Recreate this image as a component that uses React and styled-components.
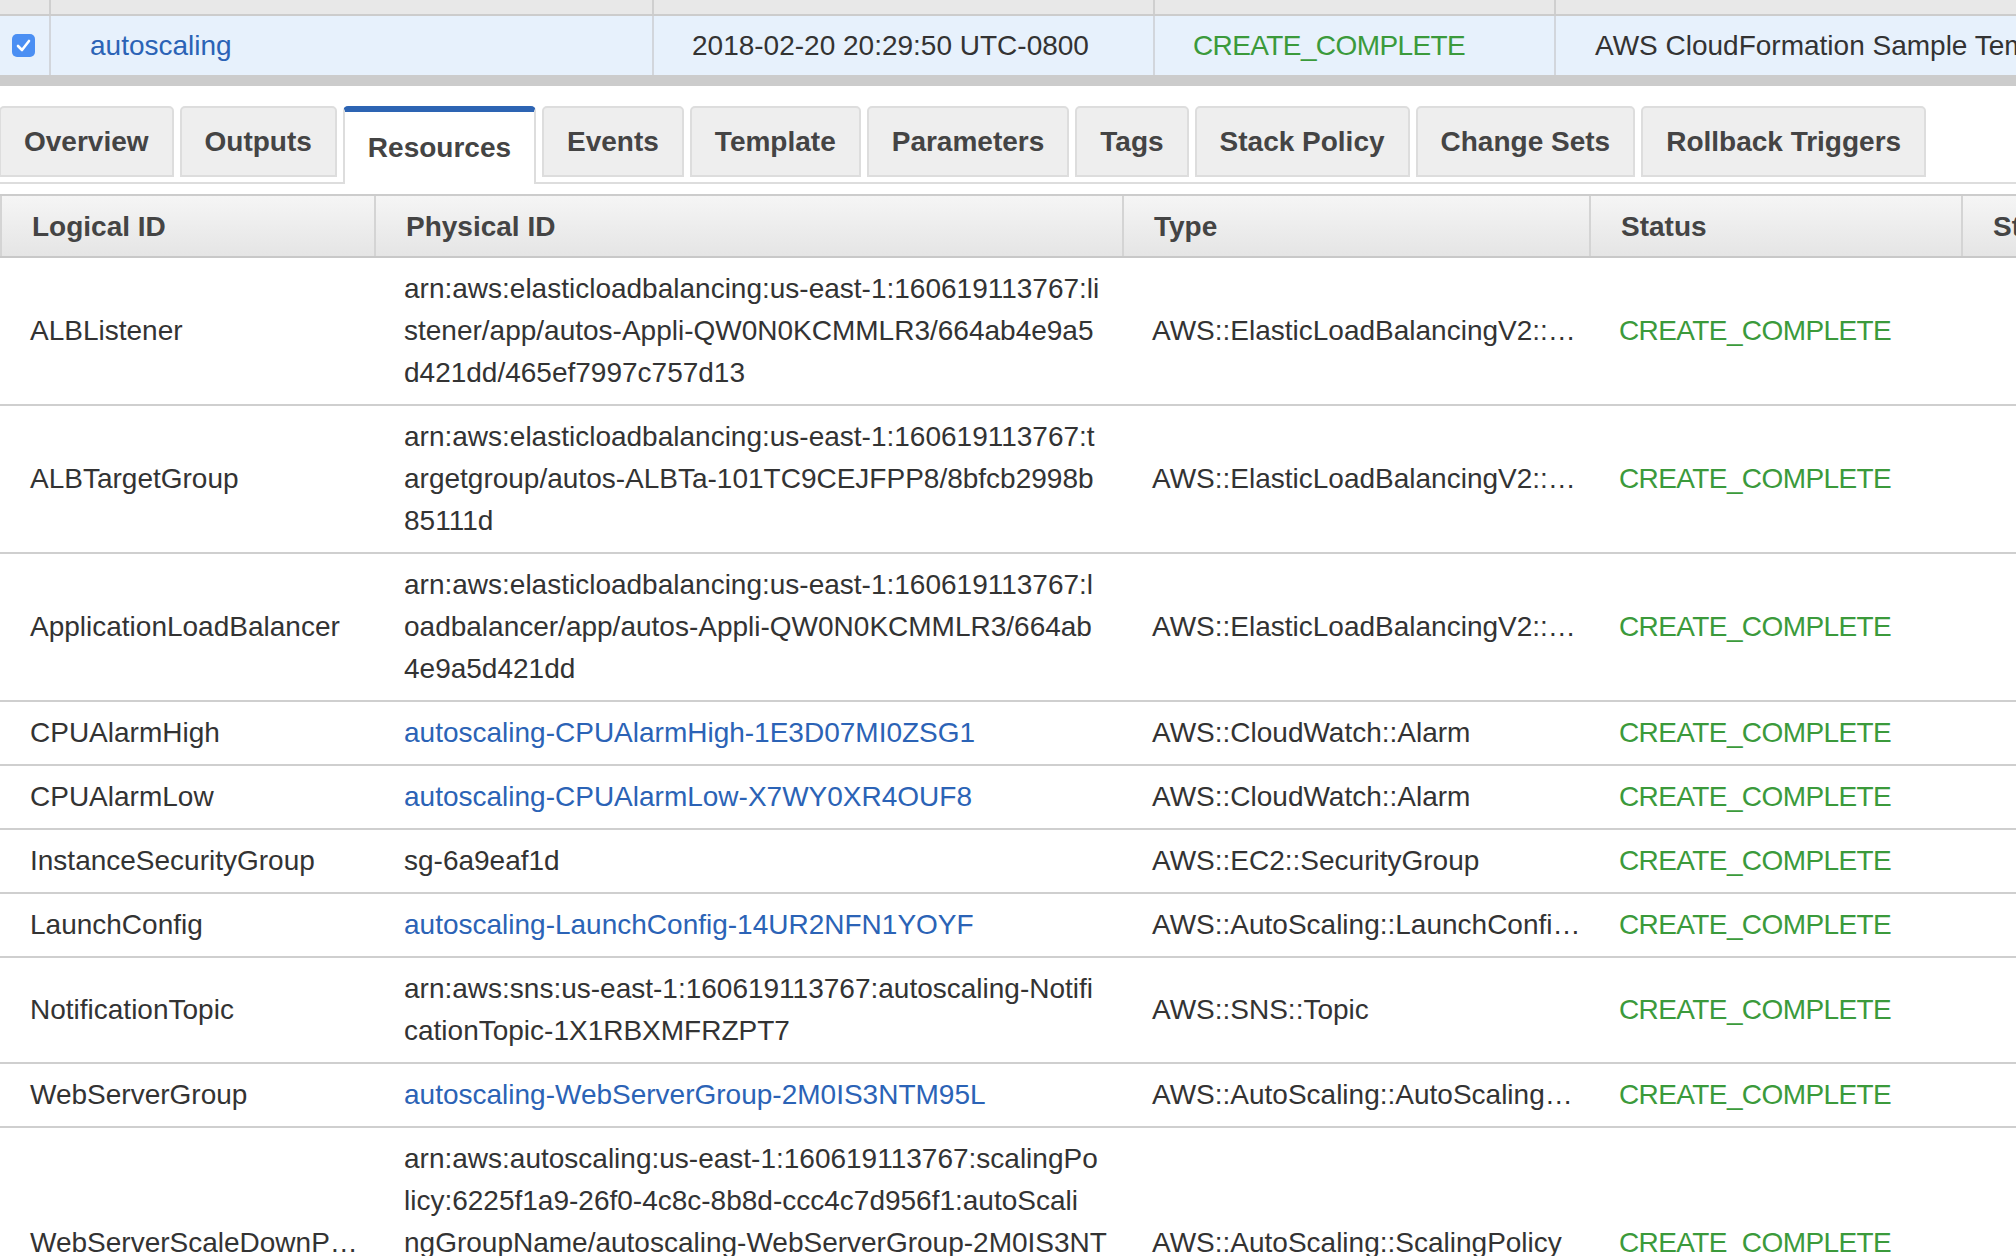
import styled, { createGlobalStyle } from 'styled-components';

const GlobalStyle = createGlobalStyle`
	html, body {
		margin: 0;
		padding: 0;
		background: #ffffff;
		overflow: hidden;
	}
	body {
		font-family: "Liberation Sans", Arial, Helvetica, sans-serif;
		color: #333333;
	}
	* {
		box-sizing: border-box;
	}
`;

const Page = styled.div`
	width: 2016px;
	height: 1256px;
	overflow: hidden;
	font-size: 28px;
`;

const stackColumns = '49px 603px 501px 401px 600px';
const resourceColumns = '374px 748px 467px 372px 500px';

const StackHead = styled.div`
	display: grid;
	grid-template-columns: ${stackColumns};
	height: 16px;
	background: #e8e8e8;
	border-bottom: 2px solid #cccccc;
`;

const StackHeadCell = styled.div`
	border-left: ${(props) => (props.$first ? 'none' : '2px solid #cfcfcf')};
`;

const StackRow = styled.div`
	display: grid;
	grid-template-columns: ${stackColumns};
	height: 59px;
	background: #e7f1fc;
`;

const StackCell = styled.div`
	display: flex;
	align-items: center;
	padding-left: ${(props) => props.$pad || 38}px;
	border-left: ${(props) => (props.$first ? 'none' : '2px solid #d2d6dc')};
	white-space: nowrap;
	overflow: hidden;
	color: ${(props) => props.$color || '#333333'};
	letter-spacing: ${(props) => (props.$status ? '-0.6px' : 'normal')};
`;

const Checkbox = styled.span`
	display: inline-flex;
	align-items: center;
	justify-content: center;
	width: 23px;
	height: 23px;
	border-radius: 5px;
	background: #4b8ff3;
`;

const Splitter = styled.div`
	height: 11px;
	background: #cccccc;
`;

const TabBar = styled.div`
	display: flex;
	align-items: flex-start;
	gap: 6px;
	margin-top: 20px;
	margin-left: -1px;
	height: 78px;
	border-bottom: 2px solid #dddddd;
`;

const Tab = styled.div`
	display: flex;
	align-items: center;
	height: ${(props) => (props.$active ? '78px' : '71px')};
	padding: 0 23px;
	font-weight: bold;
	font-size: 28px;
	color: #444444;
	white-space: nowrap;
	background: ${(props) => (props.$active ? '#ffffff' : '#eeeeee')};
	border: 2px solid #dddddd;
	border-top: ${(props) => (props.$active ? '6px solid #2d64b3' : '2px solid #dddddd')};
	border-bottom: ${(props) => (props.$active ? 'none' : '2px solid #dddddd')};
	border-radius: 5px 5px 0 0;
`;

const Table = styled.div`
	margin-top: 10px;
`;

const HeadRow = styled.div`
	display: grid;
	grid-template-columns: ${resourceColumns};
	height: 64px;
	border-top: 2px solid #cccccc;
	border-bottom: 2px solid #c8c8c8;
	background: linear-gradient(180deg, #f5f5f5 0%, #e5e5e5 100%);
`;

const HeadCell = styled.div`
	display: flex;
	align-items: center;
	padding-left: 30px;
	padding-top: 2px;
	font-weight: bold;
	color: #444444;
	white-space: nowrap;
	overflow: hidden;
	border-left: 2px solid #d4d4d4;
`;

const Row = styled.div`
	display: grid;
	grid-template-columns: ${resourceColumns};
	align-items: center;
	border-bottom: 2px solid #cfcfcf;
	padding: 10px 0;
	line-height: 42px;
`;

const Cell = styled.div`
	padding: 0 8px 0 30px;
	white-space: ${(props) => (props.$wrap ? 'normal' : 'nowrap')};
	overflow: hidden;
	text-overflow: ellipsis;
	color: ${(props) => props.$color || '#333333'};
	letter-spacing: ${(props) => (props.$status ? '-0.6px' : 'normal')};
`;

const Line = styled.span`
	display: block;
`;

const Link = styled.a`
	color: #2b63b6;
	text-decoration: none;
`;

const tabs = [
	'Overview',
	'Outputs',
	'Resources',
	'Events',
	'Template',
	'Parameters',
	'Tags',
	'Stack Policy',
	'Change Sets',
	'Rollback Triggers',
];

const resources = [
	{
		logical: 'ALBListener',
		physical: [
			'arn:aws:elasticloadbalancing:us-east-1:160619113767:li',
			'stener/app/autos-Appli-QW0N0KCMMLR3/664ab4e9a5',
			'd421dd/465ef7997c757d13',
		],
		type: 'AWS::ElasticLoadBalancingV2::Listener',
	},
	{
		logical: 'ALBTargetGroup',
		physical: [
			'arn:aws:elasticloadbalancing:us-east-1:160619113767:t',
			'argetgroup/autos-ALBTa-101TC9CEJFPP8/8bfcb2998b',
			'85111d',
		],
		type: 'AWS::ElasticLoadBalancingV2::TargetGroup',
	},
	{
		logical: 'ApplicationLoadBalancer',
		physical: [
			'arn:aws:elasticloadbalancing:us-east-1:160619113767:l',
			'oadbalancer/app/autos-Appli-QW0N0KCMMLR3/664ab',
			'4e9a5d421dd',
		],
		type: 'AWS::ElasticLoadBalancingV2::LoadBalancer',
	},
	{
		logical: 'CPUAlarmHigh',
		link: 'autoscaling-CPUAlarmHigh-1E3D07MI0ZSG1',
		type: 'AWS::CloudWatch::Alarm',
	},
	{
		logical: 'CPUAlarmLow',
		link: 'autoscaling-CPUAlarmLow-X7WY0XR4OUF8',
		type: 'AWS::CloudWatch::Alarm',
	},
	{
		logical: 'InstanceSecurityGroup',
		physical: ['sg-6a9eaf1d'],
		type: 'AWS::EC2::SecurityGroup',
	},
	{
		logical: 'LaunchConfig',
		link: 'autoscaling-LaunchConfig-14UR2NFN1YOYF',
		type: 'AWS::AutoScaling::LaunchConfiguration',
	},
	{
		logical: 'NotificationTopic',
		physical: [
			'arn:aws:sns:us-east-1:160619113767:autoscaling-Notifi',
			'cationTopic-1X1RBXMFRZPT7',
		],
		type: 'AWS::SNS::Topic',
	},
	{
		logical: 'WebServerGroup',
		link: 'autoscaling-WebServerGroup-2M0IS3NTM95L',
		type: 'AWS::AutoScaling::AutoScalingGroup',
	},
	{
		logical: 'WebServerScaleDownPolicy',
		physical: [
			'arn:aws:autoscaling:us-east-1:160619113767:scalingPo',
			'licy:6225f1a9-26f0-4c8c-8b8d-ccc4c7d956f1:autoScali',
			'ngGroupName/autoscaling-WebServerGroup-2M0IS3NT',
			'M95L:policyName/autoscaling-WebServerScaleDownP',
			'olicy-1QX4ZJ8R2K7LM',
		],
		type: 'AWS::AutoScaling::ScalingPolicy',
	},
];

function CheckIcon() {
	return (
		<svg width="15" height="13" viewBox="0 0 15 13">
			<path d="M2 7 L6 11 L13 2" fill="none" stroke="#ffffff" strokeWidth="2.6" strokeLinecap="round" strokeLinejoin="round" />
		</svg>
	);
}

export default function App() {
	return (
		<Page>
			<GlobalStyle />
			<StackHead>
				<StackHeadCell $first />
				<StackHeadCell />
				<StackHeadCell />
				<StackHeadCell />
				<StackHeadCell />
			</StackHead>
			<StackRow>
				<StackCell $first $pad={12}>
					<Checkbox>
						<CheckIcon />
					</Checkbox>
				</StackCell>
				<StackCell $pad={39}>
					<Link>autoscaling</Link>
				</StackCell>
				<StackCell $pad={38}>2018-02-20 20:29:50 UTC-0800</StackCell>
				<StackCell $pad={38} $status $color="#3b9a3b">CREATE_COMPLETE</StackCell>
				<StackCell $pad={39}>AWS CloudFormation Sample Template AutoScalingMultiAZWithNotifications</StackCell>
			</StackRow>
			<Splitter />

			<TabBar>
				{tabs.map((t) => (
					<Tab key={t} $active={t === 'Resources'}>{t}</Tab>
				))}
			</TabBar>

			<Table>
				<HeadRow>
					<HeadCell>Logical ID</HeadCell>
					<HeadCell>Physical ID</HeadCell>
					<HeadCell>Type</HeadCell>
					<HeadCell>Status</HeadCell>
					<HeadCell>Status Reason</HeadCell>
				</HeadRow>
				{resources.map((r) => (
					<Row key={r.logical}>
						<Cell>{r.logical}</Cell>
						<Cell $wrap>
							{r.link ? (
								<Link>{r.link}</Link>
							) : (
								r.physical.map((l) => <Line key={l}>{l}</Line>)
							)}
						</Cell>
						<Cell>{r.type}</Cell>
						<Cell $status $color="#3b9a3b">CREATE_COMPLETE</Cell>
						<Cell />
					</Row>
				))}
			</Table>
		</Page>
	);
}
